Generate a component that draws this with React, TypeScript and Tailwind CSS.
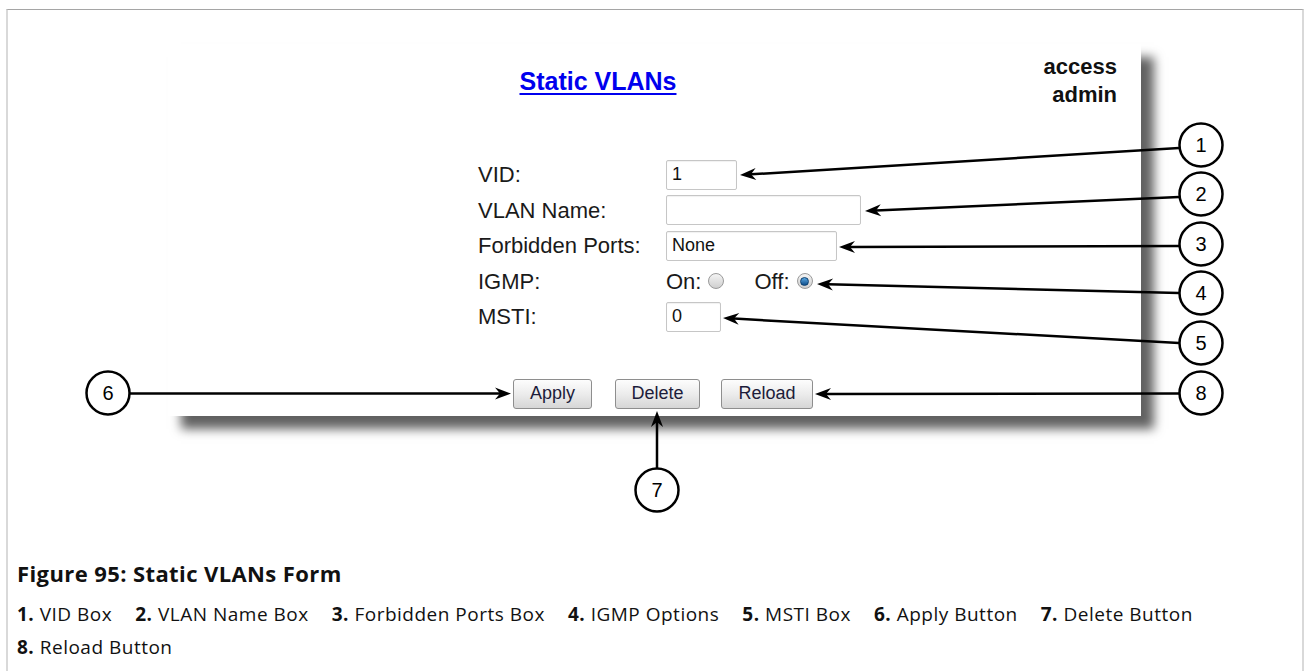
import React from "react";

type Callout = { n: string; cx: number; cy: number; from: [number, number]; to: [number, number] };

const callouts: Callout[] = [
  { n: "1", cx: 1201, cy: 145, from: [1179, 148], to: [740, 175] },
  { n: "2", cx: 1201, cy: 194, from: [1179, 197], to: [865, 211] },
  { n: "3", cx: 1201, cy: 244, from: [1179, 246], to: [839, 247] },
  { n: "4", cx: 1201, cy: 293, from: [1179, 293], to: [817, 284] },
  { n: "5", cx: 1201, cy: 343, from: [1179, 343], to: [723, 318] },
  { n: "8", cx: 1201, cy: 393, from: [1179, 393.5], to: [815, 394] },
  { n: "6", cx: 108, cy: 393, from: [130, 393.5], to: [511, 393.5] },
  { n: "7", cx: 657, cy: 490, from: [657, 468], to: [657, 411] },
];

function Arrow({ from, to }: { from: [number, number]; to: [number, number] }) {
  const dx = to[0] - from[0];
  const dy = to[1] - from[1];
  const len = Math.hypot(dx, dy);
  const ux = dx / len;
  const uy = dy / len;
  const nx = -uy;
  const ny = ux;
  const L = 16;
  const W = 6;
  const N = 11;
  const p1 = `${to[0]},${to[1]}`;
  const p2 = `${to[0] - ux * L + nx * W},${to[1] - uy * L + ny * W}`;
  const p3 = `${to[0] - ux * N},${to[1] - uy * N}`;
  const p4 = `${to[0] - ux * L - nx * W},${to[1] - uy * L - ny * W}`;
  return (
    <g>
      <line x1={from[0]} y1={from[1]} x2={to[0] - ux * N} y2={to[1] - uy * N} stroke="#000" strokeWidth={2.5} />
      <polygon points={`${p1} ${p2} ${p3} ${p4}`} fill="#000" />
    </g>
  );
}

function Callouts() {
  return (
    <svg className="absolute left-0 top-0 pointer-events-none" width={1308} height={540} viewBox="0 0 1308 540">
      {callouts.map((c) => (
        <Arrow key={"a" + c.n} from={c.from} to={c.to} />
      ))}
      {callouts.map((c) => (
        <g key={"c" + c.n}>
          <circle cx={c.cx} cy={c.cy} r={21.5} fill="#fff" stroke="#000" strokeWidth={2.5} />
          <text
            x={c.cx}
            y={c.cy + 7}
            textAnchor="middle"
            fontSize={20}
            fontFamily="'Liberation Sans', Arial, sans-serif"
            fill="#000"
          >
            {c.n}
          </text>
        </g>
      ))}
    </svg>
  );
}

function TextBox({ value, width }: { value: string; width: string }) {
  return (
    <div
      className={`${width} h-[30px] border border-[#c6c6c6] rounded-[2px] bg-white pl-[5px] flex items-center text-[18px] text-[#111] shadow-[inset_0_1px_1px_rgba(0,0,0,0.06)]`}
    >
      {value}
    </div>
  );
}

function Radio({ checked }: { checked?: boolean }) {
  return (
    <span className="w-[16px] h-[16px] rounded-full border border-[#9a9a9a] bg-gradient-to-b from-[#f4f4f4] to-[#cfcfcf] flex items-center justify-center">
      {checked ? (
        <span className="w-[9px] h-[9px] rounded-full bg-gradient-to-b from-[#5aa7e0] to-[#0d4f8c] border border-[#0b3f70]" />
      ) : null}
    </span>
  );
}

function Row({ label, children }: { label: string; children: React.ReactNode }) {
  return (
    <div className="h-[35.5px] flex items-center">
      <div className="w-[188px] text-[22px] text-[#1a1a1a]">{label}</div>
      {children}
    </div>
  );
}

function Button({ label, width }: { label: string; width: string }) {
  return (
    <div
      className={`${width} h-[30px] border border-[#8e8e8e] rounded-[3px] bg-gradient-to-b from-[#fdfdfd] via-[#ececec] to-[#d6d6d6] flex items-center justify-center text-[18px] text-[#1c1c3a]`}
    >
      {label}
    </div>
  );
}

function Panel() {
  return (
    <div className="w-[973px] h-[372px] bg-white shadow-[13px_13px_10px_rgba(0,0,0,0.62)] pt-[9px] font-['Liberation_Sans',Arial,sans-serif]">
      <div className="flex">
        <div className="flex-1 text-center pt-[13px]">
          <span className="text-[25px] leading-[30px] font-bold text-[#0000ee] underline decoration-2 underline-offset-[3px]">
            Static VLANs
          </span>
        </div>
        <div className="w-[113px] pr-[24px] text-right text-[22px] leading-[28px] font-bold text-[#111]">
          <div>access</div>
          <div>admin</div>
        </div>
      </div>
      <div className="mt-[48px] ml-[310px]">
        <Row label="VID:">
          <TextBox value="1" width="w-[71px]" />
        </Row>
        <Row label="VLAN Name:">
          <TextBox value="" width="w-[195px]" />
        </Row>
        <Row label="Forbidden Ports:">
          <TextBox value="None" width="w-[171px]" />
        </Row>
        <Row label="IGMP:">
          <div className="flex items-center text-[22px] text-[#1a1a1a]">
            <span>On:</span>
            <span className="ml-[7px]">
              <Radio />
            </span>
            <span className="ml-[30px]">Off:</span>
            <span className="ml-[7px]">
              <Radio checked />
            </span>
          </div>
        </Row>
        <Row label="MSTI:">
          <TextBox value="0" width="w-[55px]" />
        </Row>
      </div>
      <div className="mt-[44px] ml-[345px] flex">
        <Button label="Apply" width="w-[79px]" />
        <div className="ml-[23px]">
          <Button label="Delete" width="w-[85px]" />
        </div>
        <div className="ml-[21px]">
          <Button label="Reload" width="w-[92px]" />
        </div>
      </div>
    </div>
  );
}

function Item({ n, t }: { n: string; t: string }) {
  return (
    <span>
      <span className="font-bold">{n}</span> {t}
    </span>
  );
}

function Caption() {
  const items: [string, string][] = [
    ["1.", "VID Box"],
    ["2.", "VLAN Name Box"],
    ["3.", "Forbidden Ports Box"],
    ["4.", "IGMP Options"],
    ["5.", "MSTI Box"],
    ["6.", "Apply Button"],
    ["7.", "Delete Button"],
  ];
  return (
    <div className="pl-[9px] font-['Open_Sans','Noto_Sans',sans-serif] text-[#111]">
      <div className="mt-[19px] text-[22px] leading-[28px] font-bold tracking-[0.4px]">Figure 95: Static VLANs Form</div>
      <div className="mt-[11px] text-[19px] leading-[33px] tracking-[0.5px]">
        <div className="flex gap-x-[23px]">
          {items.map(([n, t]) => (
            <Item key={n} n={n} t={t} />
          ))}
        </div>
        <div>
          <Item n="8." t="Reload Button" />
        </div>
      </div>
    </div>
  );
}

export default function App() {
  return (
    <div className="relative w-[1308px] h-[671px] overflow-hidden bg-white pt-[9px] pl-[6px] pr-[4px]">
      <div className="h-[700px] border-t border-t-[#a5a5a5] border-x-2 border-x-[#d9d9d9]">
        <div className="h-[530px] pt-[34px] pl-[160px]">
          <Panel />
        </div>
        <Caption />
      </div>
      <Callouts />
    </div>
  );
}
